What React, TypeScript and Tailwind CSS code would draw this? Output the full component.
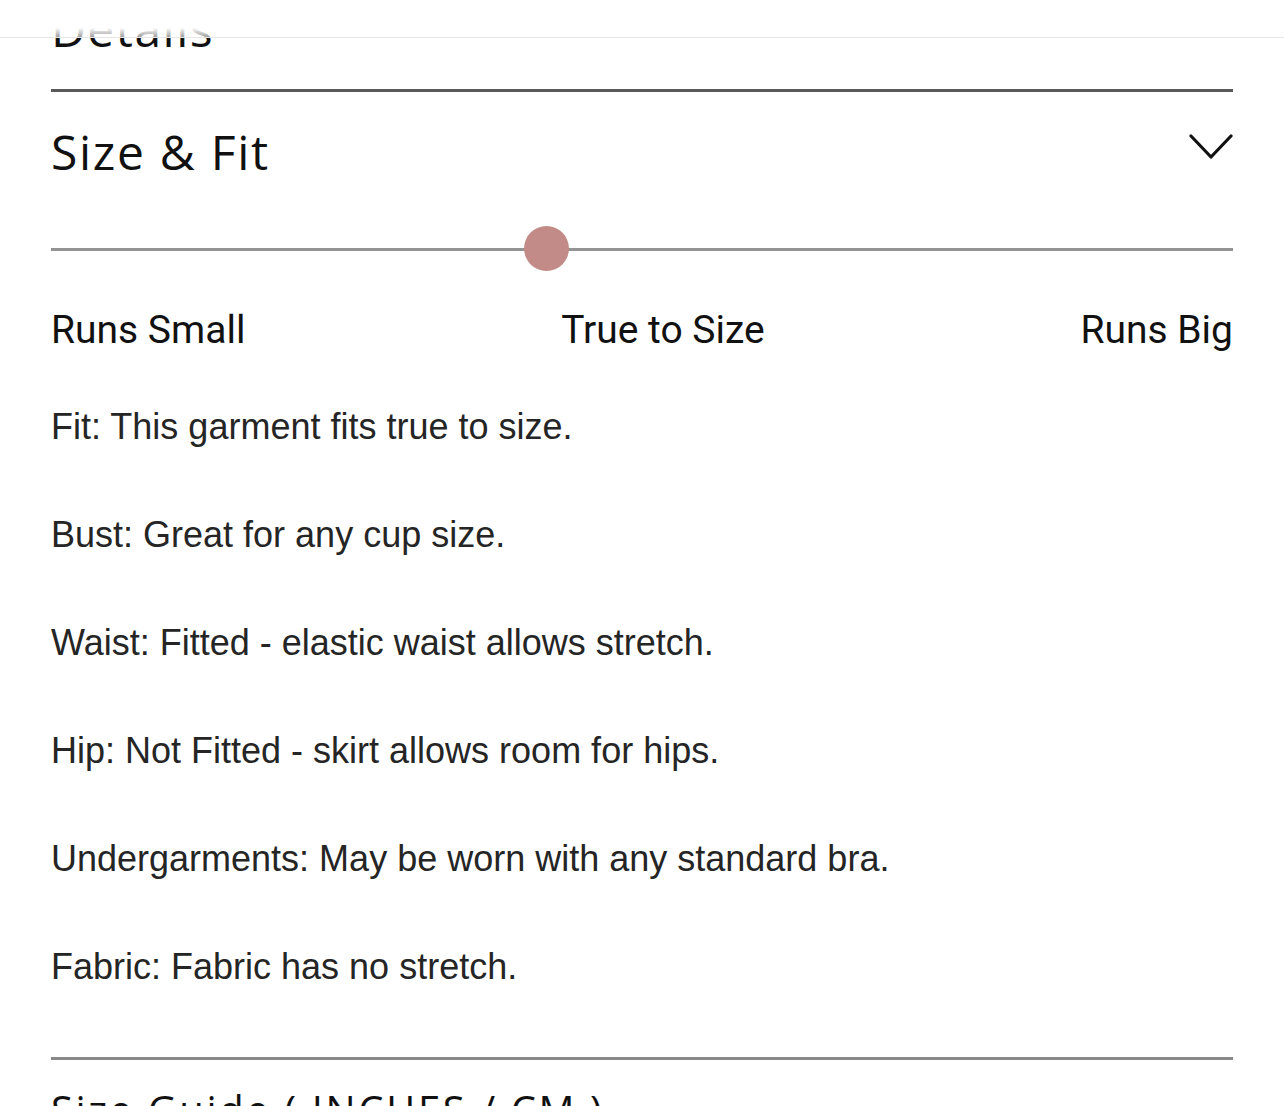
import React from "react";

const body = [
  "Fit: This garment fits true to size.",
  "Bust: Great for any cup size.",
  "Waist: Fitted - elastic waist allows stretch.",
  "Hip: Not Fitted - skirt allows room for hips.",
  "Undergarments: May be worn with any standard bra.",
  "Fabric: Fabric has no stretch.",
];

export default function App() {
  return (
    <div className="relative w-[1284px] h-[1106px] overflow-hidden bg-white">
      <div className="px-[51px]">
        <div
          className="h-[58px] leading-[58px] text-[48px] text-[#111] tracking-[1.5px]"
          style={{ fontFamily: '"Open Sans", sans-serif' }}
        >
          Details
        </div>
        <div className="mt-[31px] h-[3px] bg-[#5a5a5a]" />
        <div className="mt-[31px] flex justify-between items-start h-[58px]">
          <div
            className="leading-[58px] text-[48px] text-[#111] tracking-[1.7px]"
            style={{ fontFamily: '"Open Sans", sans-serif' }}
          >
            Size &amp; Fit
          </div>
          <svg
            width="46"
            height="26"
            viewBox="0 0 46 26"
            className="mt-[10px] -mr-[1px]"
          >
            <path
              d="M3 3 L23 24 L43 3"
              fill="none"
              stroke="#111"
              strokeWidth="3.2"
              strokeLinecap="round"
              strokeLinejoin="round"
            />
          </svg>
        </div>
        <div className="relative mt-[45px] h-[46px]">
          <div className="absolute left-0 right-0 top-[21.5px] h-[3px] bg-[#939393]" />
          <div className="absolute left-[473px] top-0 w-[45px] h-[45px] rounded-full bg-[#c28b87]" />
        </div>
        <div
          className="mt-[35px] flex justify-between text-[39px] leading-[46px] text-[#111]"
          style={{ fontFamily: "Roboto, sans-serif" }}
        >
          <span>Runs Small</span>
          <span>True to Size</span>
          <span>Runs Big</span>
        </div>
        <div
          className="mt-[53px] flex flex-col gap-[67px] text-[36px] leading-[41px] text-[#252525]"
          style={{ fontFamily: '"Liberation Sans", Arial, sans-serif' }}
        >
          {body.map((t) => (
            <p key={t}>{t}</p>
          ))}
        </div>
        <div className="mt-[70px] h-[3px] bg-[#888]" />
        <div
          className="mt-[26px] text-[40px] leading-[48px] text-[#111] tracking-[2.6px] whitespace-nowrap"
          style={{ fontFamily: '"Open Sans", sans-serif' }}
        >
          Size Guide ( INCHES / CM )
        </div>
      </div>
      <div className="absolute left-0 top-0 w-full h-[38px] border-b border-[#e6e6e6] bg-linear-to-b from-white from-75% to-white/60" />
    </div>
  );
}
